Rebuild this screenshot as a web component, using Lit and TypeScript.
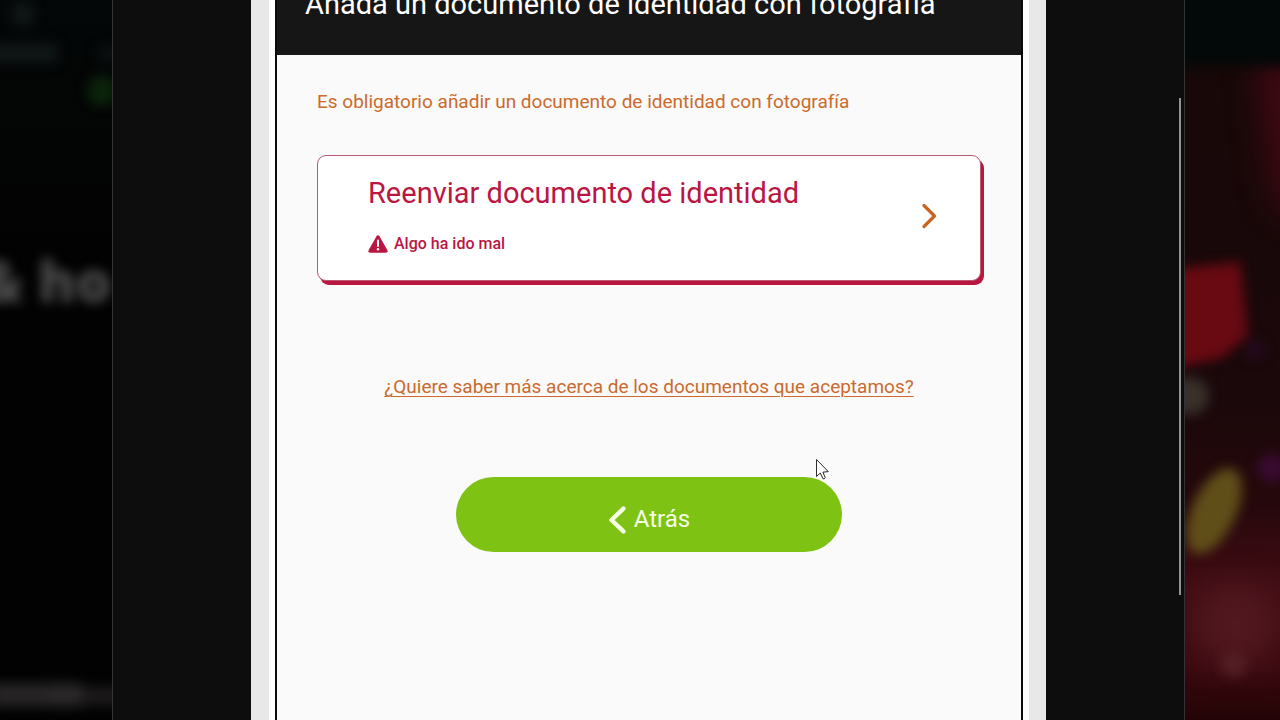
import { LitElement, html, css, svg } from "lit";
import { customElement, property } from "lit/decorators.js";

/** Dimmed, out-of-focus page behind the dialog. */
@customElement("blurred-backdrop")
export class BlurredBackdrop extends LitElement {
  static styles = css`
    :host {
      display: block;
      position: absolute;
      inset: 0;
      background: #020202;
    }
    .scene {
      display: block;
      width: 100%;
      height: 100%;
    }
    .headline {
      font: 800 56px "Open Sans", sans-serif;
      fill: #4c4c4c;
    }
  `;

  render() {
    return html`
      <svg class="scene" viewBox="0 0 1280 720" preserveAspectRatio="none" aria-hidden="true">
        <defs>
          <filter id="soft" x="-50%" y="-50%" width="200%" height="200%" color-interpolation-filters="sRGB">
            <feGaussianBlur stdDeviation="6" />
          </filter>
          <filter id="softer" x="-60%" y="-60%" width="220%" height="220%" color-interpolation-filters="sRGB">
            <feGaussianBlur stdDeviation="16" />
          </filter>
          <linearGradient id="wash" x1="0" y1="0" x2="0" y2="1">
            <stop offset="0" stop-color="#180808" />
            <stop offset="0.55" stop-color="#1a080a" />
            <stop offset="0.7" stop-color="#26080c" />
            <stop offset="0.82" stop-color="#420d14" />
            <stop offset="0.92" stop-color="#3c0a10" />
            <stop offset="1" stop-color="#230406" />
          </linearGradient>
          <linearGradient id="dusk" x1="0" y1="0" x2="0" y2="1">
            <stop offset="0" stop-color="#030707" />
            <stop offset="0.4" stop-color="#040505" />
            <stop offset="1" stop-color="#020202" />
          </linearGradient>
        </defs>
        ${svg`
          <rect width="130" height="260" fill="url(#dusk)" />
          <g filter="url(#soft)">
            <circle cx="23" cy="14" r="12" fill="#111718" />
            <rect x="-10" y="44" width="68" height="18" fill="#111718" />
            <rect x="98" y="46" width="30" height="16" fill="#0b0f10" />
            <circle cx="102" cy="91" r="15" fill="#0b240a" />
            <rect x="-10" y="683" width="60" height="24" fill="#262425" />
            <rect x="50" y="683" width="32" height="24" fill="#292728" />
            <rect x="82" y="686" width="42" height="20" fill="#1b191a" />
          </g>
          <text class="headline" x="-21" y="302" filter="url(#soft)">&amp; ho</text>
          <rect x="1180" width="100" height="720" fill="url(#wash)" />
          <g filter="url(#softer)">
            <path d="M1255 60 H1320 V230 L1275 200Z" fill="#400912" />
            <ellipse cx="1236" cy="625" rx="42" ry="40" fill="#521820" />
          </g>
          <g filter="url(#soft)">
            <rect x="1165" y="-30" width="140" height="96" fill="#030808" />
            <path d="M1165 270 L1240 262 L1248 335 L1222 358 L1165 370Z" fill="#690a12" />
            <circle cx="1190" cy="396" r="19" fill="#383029" />
            <circle cx="1272" cy="468" r="14" fill="#390b32" />
            <circle cx="1255" cy="350" r="10" fill="#250a20" />
            <ellipse cx="1214" cy="511" rx="22" ry="46" transform="rotate(25 1214 511)" fill="#604e19" />
            <circle cx="1234" cy="664" r="12" fill="#552027" />
          </g>
        `}
      </svg>
    `;
  }
}

/** Outlined card button with a title, a status line and a chevron. */
@customElement("document-card")
export class DocumentCard extends LitElement {
  @property() heading = "";
  @property() status = "";

  static styles = css`
    :host {
      display: block;
    }
    .card {
      display: flex;
      justify-content: space-between;
      gap: 24px;
      box-sizing: border-box;
      width: 100%;
      padding: 18px 42px 26px 50px;
      border: 1px solid #bd5873;
      border-radius: 9px;
      background: #ffffff;
      box-shadow: 3px 4px 0 #b91642;
      color: #b91642;
      font-family: Roboto, sans-serif;
      text-align: left;
      cursor: pointer;
    }
    .body {
      display: flex;
      flex-direction: column;
      gap: 22px;
    }
    .heading {
      font-size: 29px;
      font-weight: 400;
      line-height: 38px;
    }
    .status {
      display: flex;
      align-items: center;
      gap: 6px;
      font-size: 16px;
      font-weight: 500;
      line-height: 20px;
    }
    .warning {
      width: 20px;
      height: 18px;
    }
    .chevron {
      width: 18px;
      height: 26px;
      margin-top: 29px;
    }
  `;

  render() {
    return html`
      <button class="card" type="button">
        <span class="body">
          <span class="heading">${this.heading}</span>
          <span class="status">
            <svg class="warning" viewBox="0 0 20 18" aria-hidden="true">
              <path d="M8.5 1.2Q10 -.6 11.500 1.200L19.300 15Q20.300 17.700 17.800 17.800H2.200Q-.3 17.700.7 15Z" fill="#b91642" />
              <path d="M10 5.500V11" stroke="#fff" stroke-width="2" stroke-linecap="round" />
              <circle cx="10" cy="14.300" r="1.200" fill="#fff" />
            </svg>
            ${this.status}
          </span>
        </span>
        <svg class="chevron" viewBox="0 0 18 26" aria-hidden="true">
          <path d="M4 2.500L14.500 13L4 23.500" fill="none" stroke="#cb6420" stroke-width="3.200" stroke-linecap="round" stroke-linejoin="round" />
        </svg>
      </button>
    `;
  }
}

@customElement("app-root")
export class AppRoot extends LitElement {
  static styles = css`
    :host {
      display: block;
      font-family: Roboto, sans-serif;
    }
    .screen {
      position: relative;
      display: flex;
      box-sizing: border-box;
      height: 100vh;
      padding: 0 95px 0 112px;
      overflow: hidden;
    }
    .dialog {
      position: relative;
      display: flex;
      flex: 1;
      box-sizing: border-box;
      padding: 0 138px;
      border: solid #333333;
      border-width: 0 1px;
      background: #0d0d0d;
    }
    .frame {
      flex: 1;
      display: flex;
      border: solid #e8e8e8;
      border-width: 0 17px 0 18px;
      padding: 0 6px;
      background: #ffffff;
    }
    .sheet {
      flex: 1;
      display: flex;
      flex-direction: column;
      border: solid #080a0b;
      border-width: 0 2px;
      background: #fafafa;
    }
    /* The sheet is scrolled, so its header is partly above the window. */
    .header {
      margin-top: -40px;
      padding: 27px 28px 33px;
      background: #161616;
      color: #ffffff;
    }
    .title {
      margin: 0;
      font-size: 29px;
      font-weight: 400;
      line-height: 35px;
    }
    .content {
      display: flex;
      flex-direction: column;
      padding: 34px 40px;
    }
    .notice {
      margin: 0 0 40px;
      color: #cb6a2c;
      font-size: 19px;
      line-height: 26px;
    }
    .more {
      align-self: center;
      margin: 93px 0 77px;
      color: #cb6a2c;
      font-size: 19px;
      line-height: 26px;
      text-decoration: underline;
      text-decoration-thickness: 1px;
      text-underline-offset: 3px;
    }
    .back {
      display: flex;
      align-items: center;
      justify-content: center;
      align-self: center;
      gap: 8px;
      width: 58%;
      padding: 25px 24px 15px;
      border: 0;
      border-radius: 38px;
      background: #7ec314;
      color: #f4ffe4;
      font-family: inherit;
      font-size: 24px;
      line-height: 35px;
      cursor: pointer;
    }
    .back-icon {
      width: 18px;
      height: 28px;
    }
    .thumb {
      position: absolute;
      top: 98px;
      right: 3px;
      width: 2px;
      height: 69%;
      background: #94928e;
    }
    .pointer {
      position: absolute;
      left: 815px;
      top: 458px;
      width: 15px;
      height: 23px;
    }
  `;

  render() {
    return html`
      <div class="screen">
        <blurred-backdrop></blurred-backdrop>
        <main class="dialog">
          <div class="frame">
            <section class="sheet">
              <header class="header">
                <h1 class="title">Añada un documento de identidad con fotografía</h1>
              </header>
              <div class="content">
                <p class="notice">Es obligatorio añadir un documento de identidad con fotografía</p>
                <document-card heading="Reenviar documento de identidad" status="Algo ha ido mal"></document-card>
                <a class="more" href="#documentos">¿Quiere saber más acerca de los documentos que aceptamos?</a>
                <button class="back" type="button">
                  <svg class="back-icon" viewBox="0 0 18 28" aria-hidden="true">
                    <path d="M15.500 2.500L3.500 14L15.500 25.500" fill="none" stroke="#f4ffe4" stroke-width="4.400" stroke-linecap="round" stroke-linejoin="round" />
                  </svg>
                  Atrás
                </button>
              </div>
            </section>
          </div>
          <div class="thumb"></div>
        </main>
        <svg class="pointer" viewBox="0 0 15 23" aria-hidden="true">
          <path d="M1.500 1.500V18.500L5.300 15L8 20.800Q9.500 21.300 10.300 19.800L7.900 14.200L13.300 13.600Z" fill="#fff" stroke="#2b2b2b" stroke-width="1" stroke-linejoin="round" />
        </svg>
      </div>
    `;
  }
}
